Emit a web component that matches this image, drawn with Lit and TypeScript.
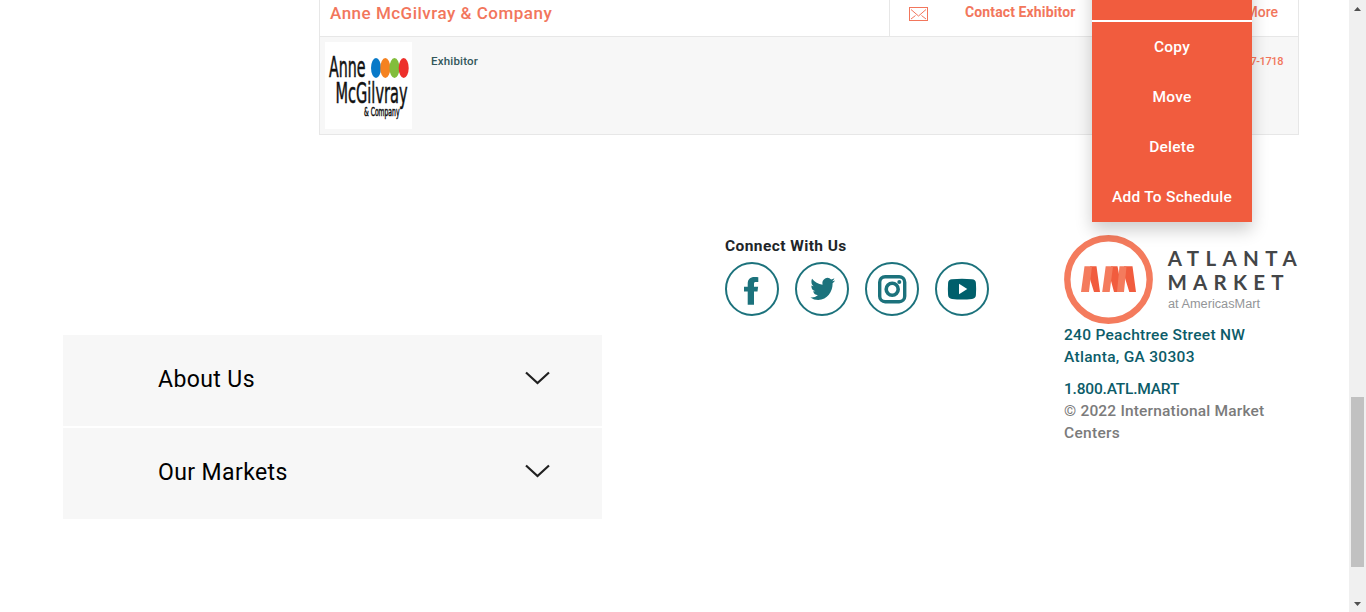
import { LitElement, html, css, svg } from "lit";
import { customElement } from "lit/decorators.js";

const facebook = svg`<path d="M33.300 15.200v4.800h-2.500c-1.300 0-1.800.6-1.800 1.900v2.800h4.100l-.6 4.900H29v13.100h-6.300V29.600H19v-4.900h3.700v-2.900c0-4.500 2.500-6.800 6.800-6.800 1.500 0 2.800.1 3.800.2z"/>`;
const twitter = svg`<path transform="translate(15.400 13.200) scale(1.030 1.140)" d="M23.950 4.570a10 10 0 0 1-2.820.770 4.960 4.960 0 0 0 2.160-2.720c-.95.550-2 .95-3.130 1.180a4.920 4.920 0 0 0-8.380 4.480C7.690 8.090 4.070 6.130 1.640 3.160a4.820 4.820 0 0 0-.67 2.480c0 1.710.87 3.210 2.190 4.100a4.900 4.900 0 0 1-2.230-.62v.060a4.920 4.920 0 0 0 3.950 4.830 5 5 0 0 1-2.210.080 4.940 4.940 0 0 0 4.600 3.420A9.870 9.870 0 0 1 0 19.540a13.990 13.990 0 0 0 7.550 2.210c9.050 0 14-7.500 14-13.980 0-.21 0-.42-.020-.63a9.940 9.940 0 0 0 2.460-2.550z"/>`;
const instagram = svg`<rect x="14.700" y="14.700" width="25" height="25" rx="5.500" fill="none" stroke="currentColor" stroke-width="3.400"/><circle cx="27.200" cy="27.300" r="6" fill="none" stroke="currentColor" stroke-width="3.600"/><circle cx="34.300" cy="20" r="2"/>`;
const youtube = svg`<path fill="#005f6b" d="M17 17.300q10-1 20 0 3.600.3 3.900 3.400.5 6.300 0 12.600-.3 3.100-3.900 3.600-10 1-20 0-3.600-.5-3.900-3.600-.5-6.300 0-12.600.3-3.100 3.900-3.400z"/><path fill="#fff" d="M24 21.700v10.600l8.300-5.300z"/>`;

@customElement("app-root")
export class AppRoot extends LitElement {
  static styles = css`
    :host {
      display: grid;
      grid-template-columns: 1fr 17px;
      position: relative;
      width: 1366px;
      height: 612px;
      overflow: hidden;
      background: #fff;
      font-family: Roboto, "Liberation Sans", sans-serif;
    }
    * { box-sizing: border-box; }
    svg { display: block; }
    .card {
      margin-left: 319px;
      width: 980px;
      height: 135px;
      border: 1px solid #e7e7e7;
      border-top: 0;
      display: grid;
      grid-template-rows: 37px 1fr;
    }
    .head {
      display: grid;
      grid-template-columns: 569px 1fr;
      border-bottom: 1px solid #e7e7e7;
      color: #f2765c;
    }
    .name { padding: 1px 0 0 10px; font-size: 17px; font-weight: 500; line-height: 25px; letter-spacing: 0.5px; white-space: nowrap; }
    .actions {
      border-left: 1px solid #e7e7e7;
      display: flex;
      align-items: flex-start;
      padding: 0 20px 0 19px;
      font-size: 14px;
      line-height: 25px;
    }
    .mail { margin-top: 7px; }
    .contact { margin-left: 36px; font-weight: 700; letter-spacing: 0.12px; white-space: nowrap; }
    .more { margin-left: auto; font-weight: 500; }
    .body { background: #f7f7f7; display: flex; padding: 5px 15px 0 5px; font-size: 11.500px; line-height: 13px; font-weight: 500; }
    .kind { margin: 13px 0 0 19px; color: #33575b; letter-spacing: 0.2px; }
    .phone { margin: 13px 0 0 auto; color: #f2765c; font-size: 11px; letter-spacing: -0.400px; }
    .foot { display: grid; grid-template-columns: 662px 339px 1fr; padding: 100px 0 0 63px; }
    .accordion { width: 539px; margin-top: 100px; display: grid; gap: 2px; }
    .fold {
      height: 91px;
      background: #f7f7f7;
      display: flex;
      justify-content: space-between;
      align-items: flex-start;
      padding: 31px 52px 0 95px;
      font-size: 23px;
      line-height: 28px;
      letter-spacing: 0.400px;
      color: #000;
    }
    .chevron { margin-top: 5px; }
    .connect { font-size: 15.500px; font-weight: 700; line-height: 20px; letter-spacing: 0.420px; color: #212529; padding-top: 1px; }
    .circles { display: flex; gap: 16px; margin-top: 6px; color: #1c727c; }
    .address { width: 236px; font-size: 15.500px; line-height: 22px; font-weight: 500; letter-spacing: 0.290px; color: #0c5c69; }
    .address p { margin: 0; white-space: nowrap; }
    .address .tel { margin-top: 10px; letter-spacing: -0.200px; }
    .address .copy { color: #7b7b7b; letter-spacing: 0.180px; }
    .address .last { letter-spacing: 0.300px; }
    .menu {
      position: absolute;
      left: 1092px;
      top: -30px;
      width: 160px;
      height: 252px;
      background: #f15c3e;
      box-shadow: 0 8px 16px rgba(0, 0, 0, 0.2);
      color: #fff;
      font-size: 15.500px;
      letter-spacing: 0.260px;
      font-weight: 500;
      text-align: center;
      line-height: 50px;
    }
    .first { height: 52px; border-bottom: 2px solid #fff; }
    .item { height: 50px; white-space: nowrap; }
    .bar { background: #f0f0f0; display: flex; flex-direction: column; align-items: center; padding: 7px 0 6px; height: 612px; }
    .thumb { width: 13px; height: 170px; background: #c1c1c1; margin: 386px 0 auto; }
  `;

  private icon(shape: unknown) {
    return html`<svg width="54" height="54" viewBox="0 0 54 54" fill="currentColor"><circle cx="27" cy="27" r="26" fill="none" stroke="currentColor" stroke-width="2"/>${shape}</svg>`;
  }

  private fold(label: string) {
    return html`<div class="fold"><span>${label}</span><svg class="chevron" width="25" height="14" viewBox="0 0 25 14"><path d="M1 1.500 12.500 12 24 1.500" fill="none" stroke="#212121" stroke-width="2.200"/></svg></div>`;
  }

  render() {
    return html`
      <main>
        <section class="card">
          <div class="head">
            <div class="name"><span>Anne McGilvray &amp; Company</span></div>
            <div class="actions">
              <svg class="mail" width="20" height="15" viewBox="0 0 20 15" fill="none" stroke="#f2765c"><rect x=".5" y=".5" width="18" height="13"/><path d="M2 2.500 9.500 9 17 2.500M2 12l4.500-3.500M17 12l-4.500-3.500"/></svg>
              <span class="contact">Contact Exhibitor</span>
              <span class="more">More</span>
            </div>
          </div>
          <div class="body">
            <svg width="87" height="87" viewBox="0 0 87 87" font-family="DejaVu Sans Condensed, DejaVu Sans, sans-serif" fill="#111">
              <rect width="87" height="87" fill="#fff"/>
              <g stroke="#111" stroke-width=".5">
                <text transform="translate(4 35) scale(.5 1)" font-size="28" textLength="73" lengthAdjust="spacingAndGlyphs">Anne</text>
                <text transform="translate(10.500 61) scale(.5 1)" font-size="28" textLength="144" lengthAdjust="spacingAndGlyphs">McGilvray</text>
                <text transform="translate(39 74) scale(.5 1)" font-size="12" textLength="71" lengthAdjust="spacingAndGlyphs">&amp; Company</text>
              </g>
              <ellipse cx="51" cy="26" rx="5" ry="10" fill="#0879c8"/><ellipse cx="60.300" cy="26" rx="5" ry="10" fill="#f58220"/><ellipse cx="69.500" cy="26" rx="5" ry="10" fill="#82bd3c"/><ellipse cx="78.700" cy="26" rx="5" ry="10" fill="#ed2f2b"/>
            </svg>
            <span class="kind">Exhibitor</span>
            <span class="phone">800-527-1718</span>
          </div>
        </section>
        <footer class="foot">
          <div class="accordion">${this.fold("About Us")}${this.fold("Our Markets")}</div>
          <div>
            <div class="connect"><span>Connect With Us</span></div>
            <div class="circles">${[facebook, twitter, instagram, youtube].map((s) => this.icon(s))}</div>
          </div>
          <div class="address">
            <svg width="236" height="89" viewBox="0 0 236 89" letter-spacing="0">
              <circle cx="44.500" cy="44.500" r="41.200" fill="none" stroke="#f47b5d" stroke-width="6.400"/>
              <path fill="#f15c3e" d="M26 31.200h6.500L36 57h-6l-4-13zM47 31.200h6.500L57 50l-1.500 7H50l-3.500-13zM60 31.200h8.500L72 57h-6.700L61 43z"/>
              <path fill="#f47b5d" d="M20.500 31.200H28L25 57h-8zM41.700 31.200H49L45.700 57h-7.500zM55.500 31.200H62.500L60 57h-7z"/>
              <g font-family="Lato, sans-serif" font-weight="700" font-size="20.500" fill="#444648">
                <text x="103.700" y="31.300" textLength="129" lengthAdjust="spacing">ATLANTA</text>
                <text x="103.500" y="54.700" textLength="116" lengthAdjust="spacing">MARKET</text>
              </g>
              <text x="104" y="73" font-family="Liberation Sans, sans-serif" font-size="12" fill="#939598" textLength="92" lengthAdjust="spacingAndGlyphs">at AmericasMart</text>
            </svg>
            <p><span>240 Peachtree Street NW</span></p>
            <p><span>Atlanta, GA 30303</span></p>
            <p class="tel"><span>1.800.ATL.MART</span></p>
            <p class="copy"><span>© 2022 International Market</span></p>
            <p class="copy last"><span>Centers</span></p>
          </div>
        </footer>
      </main>
      <div class="bar">
        <svg width="7" height="4" viewBox="0 0 7 4"><path d="M0 4 3.500 0 7 4z" fill="#505050"/></svg>
        <div class="thumb"></div>
        <svg width="7" height="4" viewBox="0 0 7 4"><path d="M0 0 3.500 4 7 0z" fill="#505050"/></svg>
      </div>
      <nav class="menu">
        <div class="first"></div>
        ${["Copy", "Move", "Delete", "Add To Schedule"].map((t) => html`<div class="item">${t}</div>`)}
      </nav>
    `;
  }
}
